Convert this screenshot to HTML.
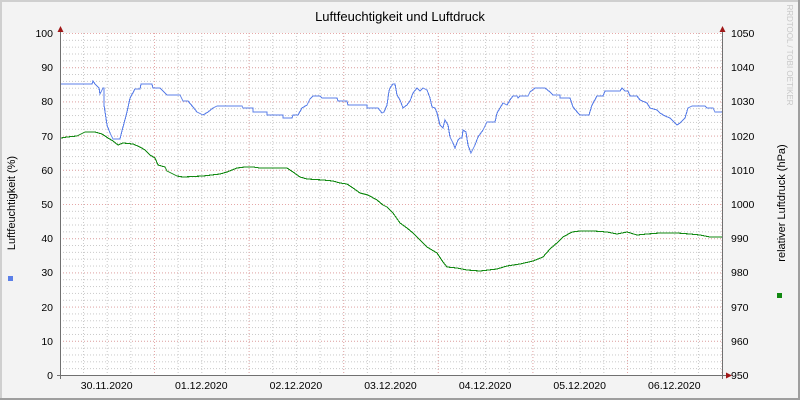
<!DOCTYPE html>
<html><head><meta charset="utf-8"><style>
html,body{margin:0;padding:0;background:#f3f3f3;}
svg{display:block;font-family:"Liberation Sans","DejaVu Sans",sans-serif;}
</style></head><body>
<svg width="800" height="400" viewBox="0 0 800 400" xmlns="http://www.w3.org/2000/svg">
<defs>
<pattern id="hmin" patternUnits="userSpaceOnUse" x="0" y="375" width="800" height="6.84">
<line x1="0" y1="0.5" x2="800" y2="0.5" stroke="#c8c8c8" stroke-width="1" stroke-dasharray="1,2"/>
</pattern>
<pattern id="vmin" patternUnits="userSpaceOnUse" x="59.4" y="0" width="23.65" height="400">
<line x1="0.5" y1="0" x2="0.5" y2="400" stroke="#c8c8c8" stroke-width="1" stroke-dasharray="1,2"/>
</pattern>
<pattern id="hmaj" patternUnits="userSpaceOnUse" x="0" y="375" width="800" height="34.2">
<line x1="0" y1="0.5" x2="800" y2="0.5" stroke="#e6a8a8" stroke-width="1" stroke-dasharray="1,2"/>
</pattern>
<pattern id="vmaj" patternUnits="userSpaceOnUse" x="154" y="0" width="94.6" height="400">
<line x1="0.5" y1="0" x2="0.5" y2="400" stroke="#e6a8a8" stroke-width="1" stroke-dasharray="1,2"/>
</pattern>
</defs>
<rect x="0" y="0" width="800" height="400" fill="#f3f3f3"/>
<rect x="0" y="0" width="800" height="2" fill="#cfcfcf"/>
<rect x="0" y="0" width="2" height="400" fill="#cfcfcf"/>
<rect x="798" y="0" width="2" height="400" fill="#9e9e9e"/>
<rect x="0" y="398" width="800" height="2" fill="#9e9e9e"/>
<rect x="61" y="33" width="661" height="342" fill="#ffffff"/>
<rect x="61" y="33" width="661" height="342" fill="url(#hmin)"/>
<rect x="61" y="33" width="661" height="342" fill="url(#vmin)"/>
<rect x="61" y="33" width="661" height="342" fill="url(#hmaj)"/>
<rect x="61" y="33" width="661" height="342" fill="url(#vmaj)"/>

<polyline fill="none" stroke="#5b7fe8" stroke-width="1.1" shape-rendering="crispEdges" points="61,84 92,84 93,81 95,84 99,88 100,94 103,88 104,88 104,105 107,125 110,133 113,139 120,139 123,127 127,112 130,98 135,89 140,89 141,84 152,84 153,88 160,88 167,95 180,95 183,101 188,101 193,107 197,112 203,115 208,112 213,108 217,106 242,106 243,108 253,108 253,112 267,112 267,115 283,115 283,118 292,118 293,115 298,115 302,108 307,105 310,99 313,96 320,96 322,98 337,98 338,101 347,101 348,105 367,105 367,108 378,108 382,113 384,112 387,105 389,91 390,88 393,84 395,84 397,95 400,100 403,108 407,105 410,101 413,93 417,88 420,91 423,88 427,90 430,98 432,107 435,108 437,113 440,125 443,128 445,120 448,125 450,137 453,143 455,148 458,140 460,138 462,138 463,130 466,132 468,145 471,153 475,145 478,137 483,130 487,122 495,122 497,113 500,108 503,103 507,105 510,100 513,96 517,96 518,98 520,96 528,96 530,92 535,88 545,88 550,92 553,95 560,95 560,98 570,98 573,107 578,113 580,115 589,115 592,105 597,96 603,96 605,91 620,91 622,88 625,91 628,91 630,96 637,96 640,100 647,103 650,108 657,110 660,113 665,116 670,118 677,125 680,123 685,118 688,108 692,106 705,106 707,108 713,108 715,112 722,112"/>

<polyline fill="none" stroke="#118811" stroke-width="1.1" shape-rendering="crispEdges" points="61,138 67,137 77,136 85,132 95,132 102,134 108,138 113,141 118,145 123,143 133,144 140,147 145,150 150,155 155,158 158,165 165,167 167,171 177,176 183,177 203,176 220,174 227,172 237,168 245,167 253,167 260,168 287,168 293,172 300,177 307,179 323,180 333,181 340,183 347,184 353,188 360,193 368,195 377,200 383,205 387,207 393,213 400,223 407,228 413,233 420,240 427,247 437,253 443,262 447,267 457,268 467,270 480,271 497,269 507,266 520,264 533,261 543,257 550,249 558,242 563,237 572,232 580,231 593,231 607,232 617,234 627,232 637,235 647,234 660,233 677,233 690,234 700,235 710,237 722,237"/>

<line x1="60.5" y1="30" x2="60.5" y2="379" stroke="#707070" stroke-width="1"/>
<line x1="722.5" y1="30" x2="722.5" y2="379" stroke="#707070" stroke-width="1"/>
<line x1="57" y1="375.5" x2="726" y2="375.5" stroke="#707070" stroke-width="1"/>
<polygon points="57.5,32 63.5,32 60.5,26" fill="#a01818"/>
<polygon points="719.5,32 725.5,32 722.5,26" fill="#a01818"/>
<polygon points="726,372.5 726,378.5 732,375.5" fill="#a01818"/>

<text x="400" y="21" font-size="13" text-anchor="middle" fill="#000">Luftfeuchtigkeit und Luftdruck</text>

<g font-size="10.5" fill="#000" text-anchor="end">
<text x="53" y="37">100</text><text x="53" y="71">90</text><text x="53" y="105">80</text>
<text x="53" y="140">70</text><text x="53" y="174">60</text><text x="53" y="208">50</text>
<text x="53" y="242">40</text><text x="53" y="276">30</text><text x="53" y="311">20</text>
<text x="53" y="345">10</text><text x="53" y="379">0</text>
</g>
<g font-size="10.5" fill="#000">
<text x="731" y="37">1050</text><text x="731" y="71">1040</text><text x="731" y="105">1030</text>
<text x="731" y="140">1020</text><text x="731" y="174">1010</text><text x="731" y="208">1000</text>
<text x="731" y="242">990</text><text x="731" y="276">980</text><text x="731" y="311">970</text>
<text x="731" y="345">960</text><text x="731" y="379">950</text>
</g>
<g font-size="10.5" fill="#000" text-anchor="middle">
<text x="106.7" y="389">30.11.2020</text><text x="201.3" y="389">01.12.2020</text>
<text x="295.9" y="389">02.12.2020</text><text x="390.5" y="389">03.12.2020</text>
<text x="485.1" y="389">04.12.2020</text><text x="579.7" y="389">05.12.2020</text>
<text x="674.3" y="389">06.12.2020</text>
</g>
<text transform="translate(15,203) rotate(-90)" font-size="11" text-anchor="middle" fill="#000">Luftfeuchtigkeit (%)</text>
<text transform="translate(785,203) rotate(-90)" font-size="11" text-anchor="middle" fill="#000">relativer Luftdruck (hPa)</text>
<text transform="translate(787,55) rotate(90)" font-size="8" text-anchor="middle" fill="#c8c8c8">RRDTOOL / TOBI OETIKER</text>
<rect x="8" y="276" width="5" height="5" fill="#5b7fe8"/>
<rect x="777" y="293" width="5" height="5" fill="#118811"/>
</svg>
</body></html>
